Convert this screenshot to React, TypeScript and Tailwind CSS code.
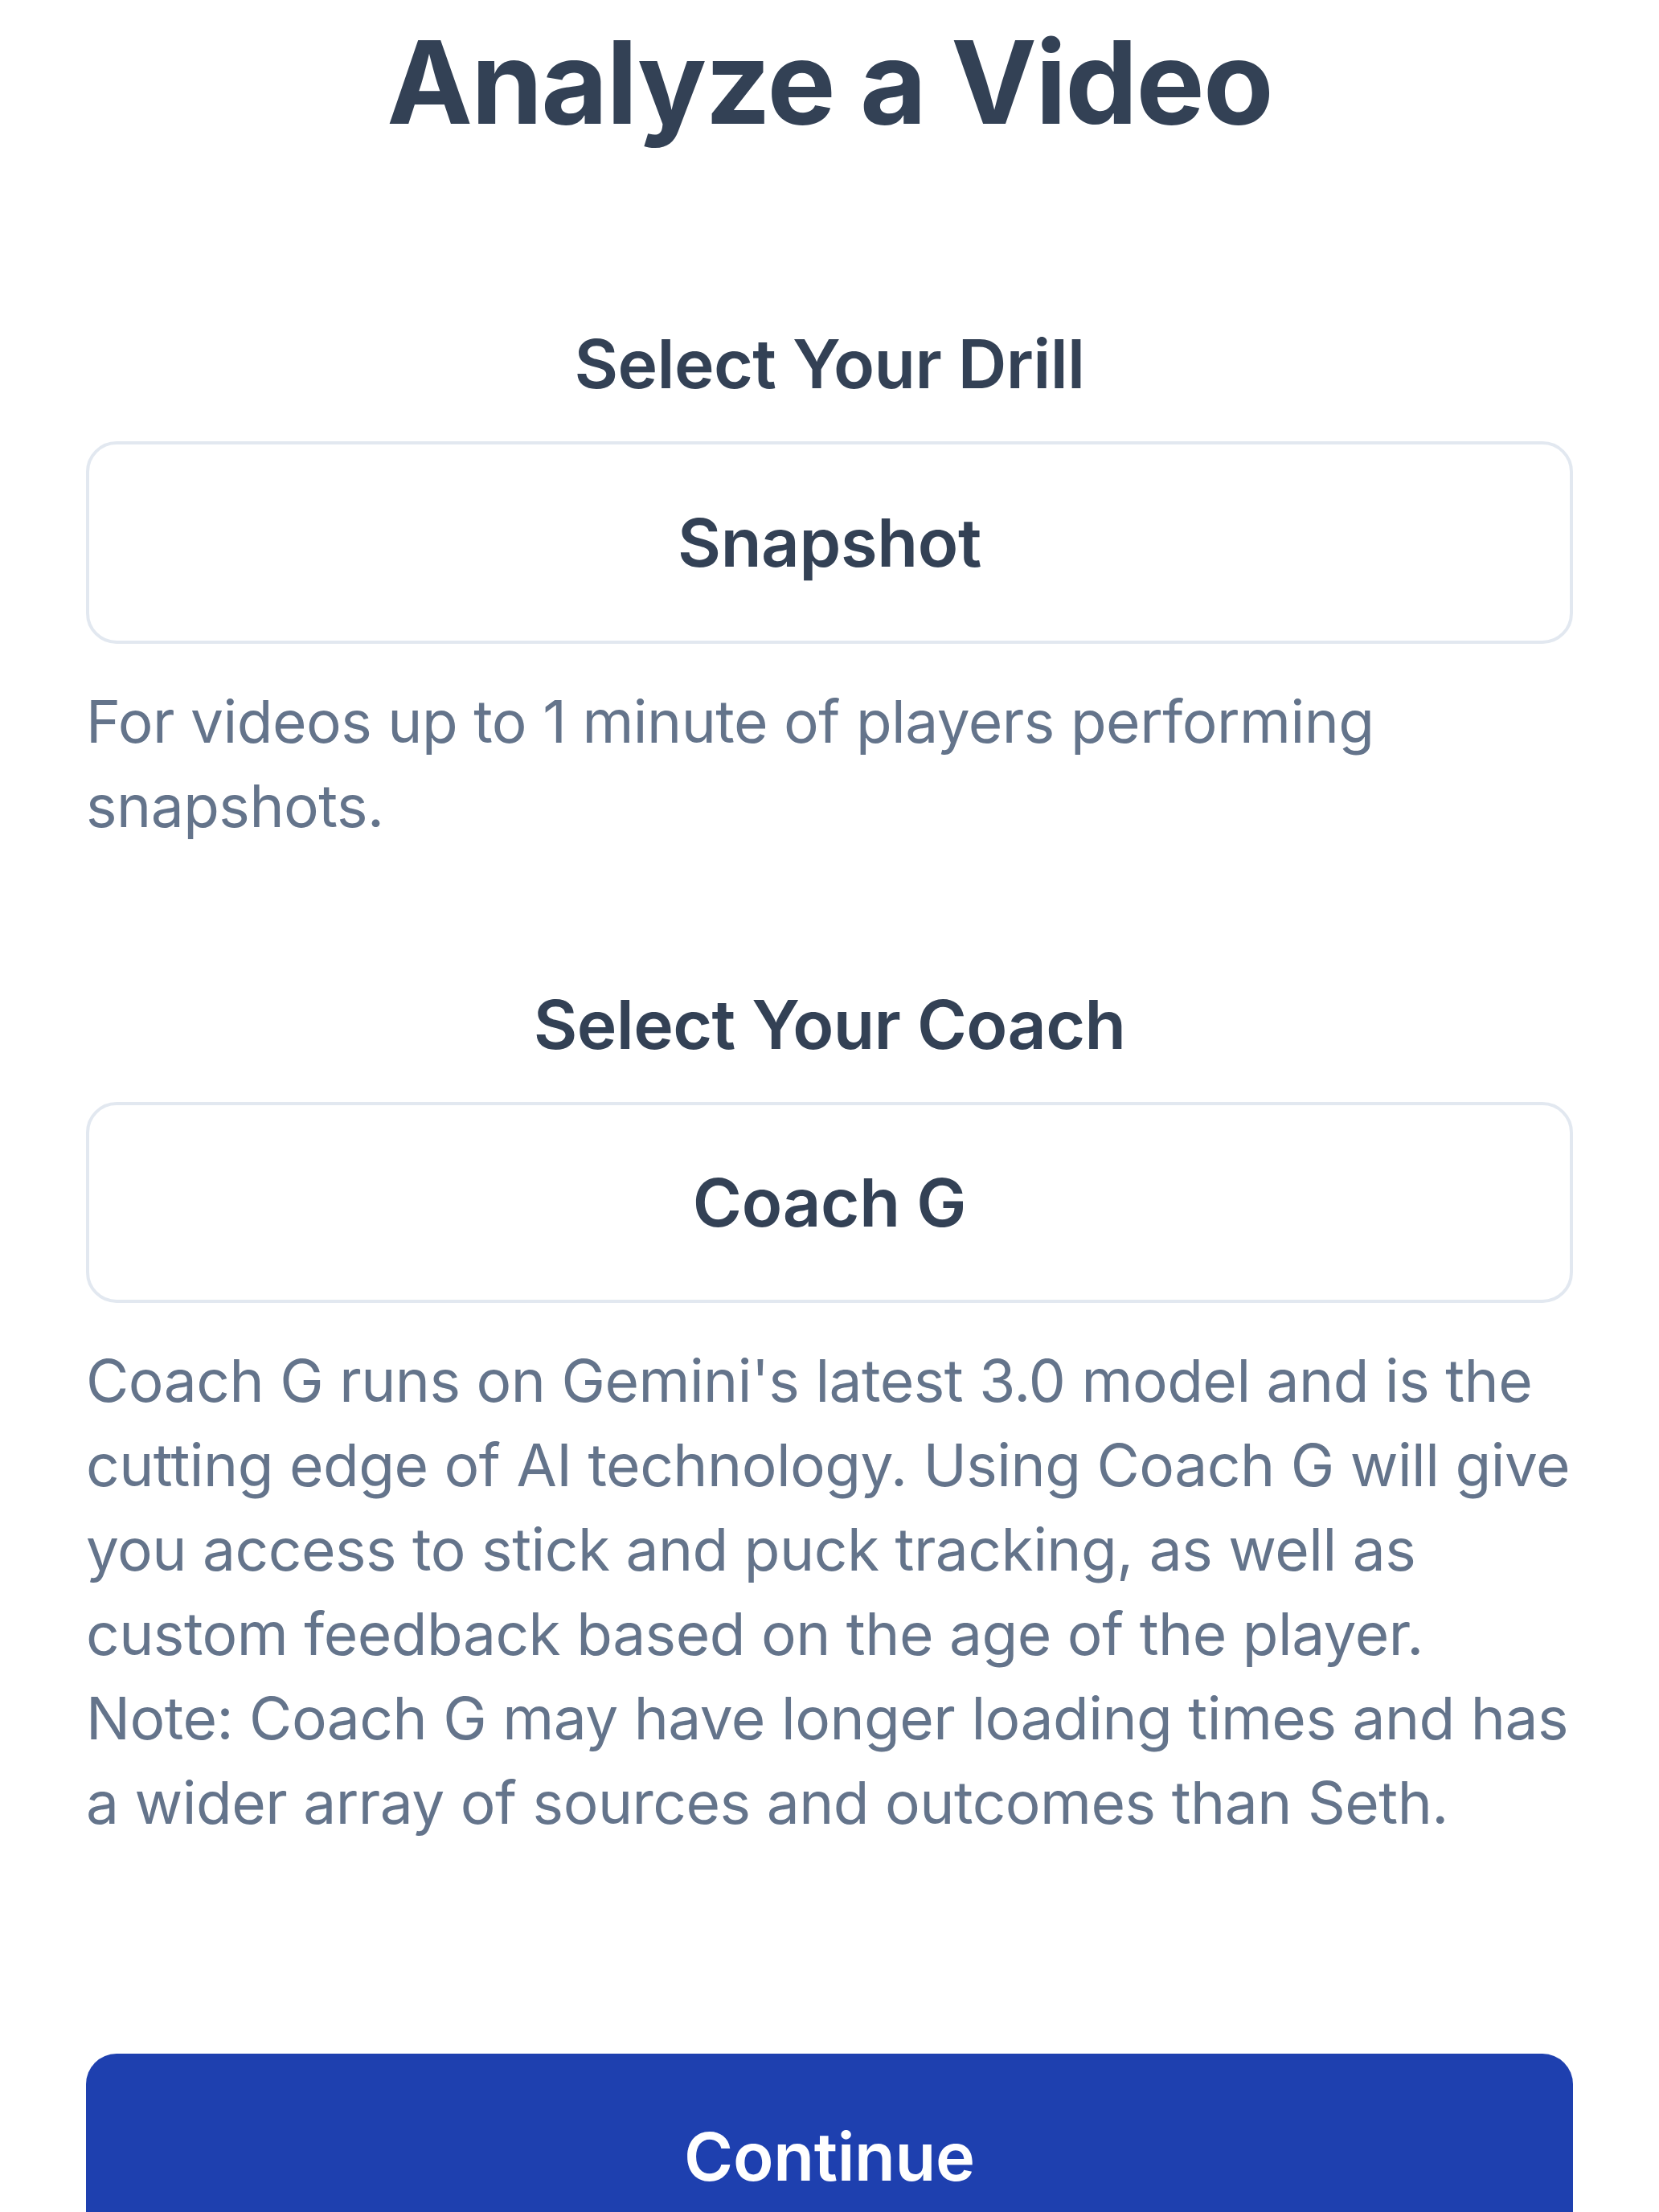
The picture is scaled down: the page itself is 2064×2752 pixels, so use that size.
import React from "react";

export default function App() {
  return (
    <div className="min-h-screen bg-white px-[107px] font-['Inter',sans-serif]">
      <h1 className="pt-[30px] text-center text-[143px] leading-[143px] font-bold tracking-[-1.8px] text-[#334155]">
        Analyze a Video
      </h1>

      <h2 className="mt-[230px] text-center text-[84px] leading-[100px] font-semibold tracking-[-0.6px] text-[#334155]">
        Select Your Drill
      </h2>
      <button className="mt-[46px] flex h-[252px] w-full items-center justify-center rounded-[38px] border-4 border-[#e2e8f0] bg-white text-[83px] leading-[100px] font-semibold tracking-[-0.3px] text-[#334155]">
        Snapshot
      </button>
      <p className="mt-[44px] text-[73px] leading-[105px] tracking-[-0.5px] text-[#64748b]">
        For videos up to 1 minute of players performing snapshots.
      </p>

      <h2 className="mt-[170px] text-center text-[84px] leading-[100px] font-semibold tracking-[-0.6px] text-[#334155]">
        Select Your Coach
      </h2>
      <button className="mt-[46px] flex h-[250px] w-full items-center justify-center rounded-[38px] border-4 border-[#e2e8f0] bg-white text-[83px] leading-[100px] font-semibold tracking-[-0.3px] text-[#334155]">
        Coach G
      </button>
      <p className="mt-[44px] text-[73px] leading-[105px] tracking-[-0.5px] text-[#64748b]">
        Coach G runs on Gemini's latest 3.0 model and is the
        <br />
        cutting edge of AI technology. Using Coach G will give
        <br />
        you access to stick and puck tracking, as well as
        <br />
        custom feedback based on the age of the player.
        <br />
        Note: Coach G may have longer loading times and has
        <br />
        a wider array of sources and outcomes than Seth.
      </p>

      <button className="mt-[260px] flex h-[256px] w-full items-center justify-center rounded-[38px] bg-[#1e40af] text-[83px] leading-[100px] font-semibold tracking-[-0.3px] text-white">
        Continue
      </button>
    </div>
  );
}
